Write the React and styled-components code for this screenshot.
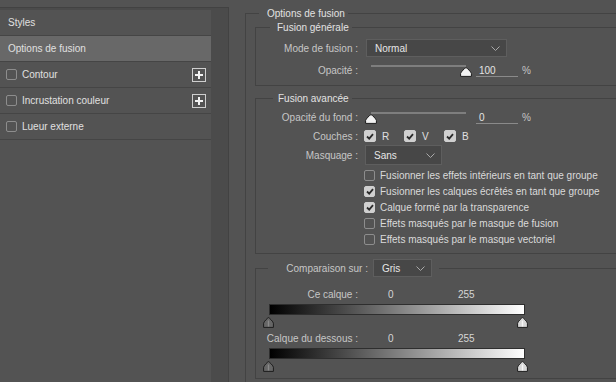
import styled, { createGlobalStyle } from 'styled-components';

const GlobalStyle = createGlobalStyle`
  html, body {
    margin: 0;
    padding: 0;
    background: #535353;
  }
  body {
    font-family: "Liberation Sans", Arial, sans-serif;
    font-size: 10px;
    color: #dcdcdc;
    overflow: hidden;
  }
  * {
    box-sizing: border-box;
  }
`

const Window = styled.div`
    display: flex;
    width: 616px;
    height: 382px;
    overflow: hidden;
    background: #535353;
`
const Sidebar = styled.div`
    width: 229px;
    flex-shrink: 0;
    margin-top: 7px;
    display: flex;
    border-top: 1px solid #424242;
    border-right: 1px solid #424242;
    background: #4b4b4b;
`
const StyleList = styled.div`
    width: 211px;
    margin-top: 2px;
    background: #535353;
`
const StyleRow = styled.div`
    display: flex;
    align-items: center;
    gap: 5px;
    height: 26px;
    padding: 0 5px 0 ${p => p.$check ? 6 : 8}px;
    border-bottom: 1px solid #454545;
    background: ${p => p.$active ? '#686868' : 'transparent'};
    color: #e0e0e0;
`
const RowText = styled.span`
    flex: 1;
`
const Content = styled.div`
    flex: 1;
    padding: 7px 0 0 16px;
`
const Group = styled.fieldset`
    margin: 0;
    padding: 0 0 0 9px;
    width: 420px;
    min-width: 0;
    min-height: 420px;
    border: 1px solid #434343;
`
const SubGroup = styled.fieldset`
    margin: ${p => p.$mt}px 0 0;
    padding: ${p => p.$pt}px 0 ${p => p.$pb}px;
    min-width: 0;
    border: 1px solid #434343;
`
const Caption = styled.legend`
    margin-left: ${p => p.$offset}px;
    padding: 0 ${p => p.$padR}px 0 ${p => p.$padL}px;
    line-height: 13px;
    color: #e2e2e2;
`
const LegendRow = styled.div`
    display: flex;
    align-items: center;
    height: 18px;
`
const Row = styled.div`
    display: flex;
    align-items: center;
    height: ${p => p.$h || 18}px;
    margin-top: ${p => p.$mt || 0}px;
`
const Label = styled.span`
    flex-shrink: 0;
    width: ${p => p.$w || 102}px;
    margin-right: ${p => p.$mr ?? 6}px;
    text-align: right;
    color: #c6c6c6;
`
const Select = styled.div`
    display: flex;
    align-items: center;
    justify-content: space-between;
    width: ${p => p.$w}px;
    height: ${p => p.$h || 18}px;
    margin-left: ${p => p.$ml || 0}px;
    padding: 0 6px 0 8px;
    background: #474747;
    border: 1px solid #5e5e5e;
    color: #e6e6e6;
`
const SliderBox = styled.div`
    position: relative;
    align-self: flex-start;
    width: 112px;
    height: 18px;
`
const Track = styled.div`
    width: 95px;
    height: 2px;
    margin: 4px 0 0 7px;
    background: #7e7e7e;
`
const Thumb = styled.svg`
    position: absolute;
    top: 6px;
`
const ValueInput = styled.div`
    display: flex;
    align-items: center;
    align-self: flex-start;
    width: 42px;
    height: 16px;
    padding: 3px 0 0 3px;
    border-bottom: 1px solid #8a8a8a;
    color: #e4e4e4;
`
const Unit = styled.span`
    margin-left: 4px;
    color: #c6c6c6;
`
const Channel = styled.div`
    display: flex;
    align-items: center;
    gap: 6px;
    width: 40px;
    color: #e0e0e0;
`
const Box = styled.span`
    display: flex;
    align-items: center;
    justify-content: center;
    flex-shrink: 0;
    width: ${p => p.$size}px;
    height: ${p => p.$size}px;
    border-radius: 2px;
    border: 1px solid ${p => p.$on ? '#cfcfcf' : '#8d8d8d'};
    background: ${p => p.$on ? '#d0d0d0' : 'transparent'};
`
const CheckList = styled.div`
    margin: 2px 0 0 108px;
`
const CheckRow = styled.div`
    display: flex;
    align-items: center;
    gap: 5px;
    height: 16px;
    color: #dadada;
`
const NumRow = styled.div`
    display: flex;
    align-items: center;
    height: 16px;
    margin-top: ${p => p.$mt || 0}px;
`
const Num = styled.span`
    width: 70px;
    margin-left: ${p => p.$ml || 0}px;
    color: #d6d6d6;
`
const BarWrap = styled.div`
    margin: 2px 0 0 13px;
    width: 256px;
`
const Bar = styled.div`
    height: 11px;
    border: 1px solid #2e2e2e;
    background: linear-gradient(to right, #000 0%, #fff 100%);
`
const ThumbRow = styled.div`
    position: relative;
    height: 12px;
    margin-top: 2px;
`
const BlendThumb = styled.svg`
    position: absolute;
    top: 0;
`

const Chevron = () => (
  <svg width="9" height="5" viewBox="0 0 9 5">
    <polyline points="0.5,0.5 4.5,4.5 8.5,0.5" fill="none" stroke="#a9a9a9" />
  </svg>
)

const Dropdown = ({ value, width, height, ml }) => (
  <Select $w={width} $h={height} $ml={ml}>
    <span>{value}</span>
    <Chevron />
  </Select>
)

const Tick = () => (
  <svg width="8" height="7" viewBox="0 0 8 7">
    <path d="M1 3.5 L3.2 5.6 L7 1.2" fill="none" stroke="#2b2b2b" strokeWidth="1.8" />
  </svg>
)

const CheckBox = ({ on, size = 11 }) => (
  <Box $on={on} $size={size}>{on && <Tick />}</Box>
)

const PlusIcon = () => (
  <svg width="14" height="14" viewBox="0 0 14 14">
    <rect x="0.5" y="0.5" width="13" height="13" fill="none" stroke="#cfcfcf" />
    <path d="M7 3v8M3 7h8" stroke="#f2f2f2" strokeWidth="2" />
  </svg>
)

const Slider = ({ value }) => (
  <SliderBox>
    <Track />
    <Thumb width="12" height="10" viewBox="0 0 12 10" style={{ left: 1 + value * 0.95 }}>
      <path d="M6 0.6 C6.8 0.6 11.4 5.2 11.4 6.4 V9.4 H0.6 V6.4 C0.6 5.2 5.2 0.6 6 0.6 Z" fill="#f2f2f2" stroke="#1c1c1c" />
    </Thumb>
  </SliderBox>
)

const Handle = ({ left, light }) => (
  <BlendThumb width="11" height="11" viewBox="0 0 11 11" style={{ left }}>
    <path d="M5.5 0.6 C6.2 0.6 10.4 5 10.4 6.2 V10.4 H0.6 V6.2 C0.6 5 4.8 0.6 5.5 0.6 Z" fill={light ? '#d8d8d8' : '#666'} stroke="#1c1c1c" />
    <path d="M5.5 3.5 V9.5" stroke={light ? '#f6f6f6' : '#8a8a8a'} strokeWidth="1.4" />
  </BlendThumb>
)

const BlendRange = ({ label, mt }) => (
  <>
    <NumRow $mt={mt}>
      <Label $mr={0}>{label}</Label>
      <Num $ml={30}>0</Num>
      <Num>255</Num>
    </NumRow>
    <BarWrap>
      <Bar />
      <ThumbRow>
        <Handle left={-6} />
        <Handle left={248} light />
      </ThumbRow>
    </BarWrap>
  </>
)

const styleItems = [
  { name: 'Styles' },
  { name: 'Options de fusion', active: true },
  { name: 'Contour', check: true, plus: true },
  { name: 'Incrustation couleur', check: true, plus: true },
  { name: 'Lueur externe', check: true },
]

const options = [
  { text: 'Fusionner les effets intérieurs en tant que groupe', on: false },
  { text: 'Fusionner les calques écrêtés en tant que groupe', on: true },
  { text: 'Calque formé par la transparence', on: true },
  { text: 'Effets masqués par le masque de fusion', on: false },
  { text: 'Effets masqués par le masque vectoriel', on: false },
]

const App = () => {
  return (
    <Window>
      <GlobalStyle />
      <Sidebar>
        <StyleList>
          {styleItems.map(item => (
            <StyleRow key={item.name} $active={item.active} $check={item.check}>
              {item.check && <CheckBox on={false} />}
              <RowText>{item.name}</RowText>
              {item.plus && <PlusIcon />}
            </StyleRow>
          ))}
        </StyleList>
      </Sidebar>

      <Content>
        <Group>
          <Caption $offset={4} $padL={8} $padR={3}>Options de fusion</Caption>

          <SubGroup $mt={1} $pt={5} $pb={6}>
            <Caption $offset={14} $padL={7} $padR={3}>Fusion générale</Caption>
            <Row>
              <Label>Mode de fusion :</Label>
              <Dropdown value="Normal" width={141} ml={2} />
            </Row>
            <Row $mt={4}>
              <Label>Opacité :</Label>
              <Slider value={100} />
              <ValueInput>100</ValueInput>
              <Unit>%</Unit>
            </Row>
          </SubGroup>

          <SubGroup $mt={6} $pt={3} $pb={6}>
            <Caption $offset={17} $padL={5} $padR={3}>Fusion avancée</Caption>
            <Row>
              <Label>Opacité du fond :</Label>
              <Slider value={0} />
              <ValueInput>0</ValueInput>
              <Unit>%</Unit>
            </Row>
            <Row $mt={1}>
              <Label>Couches :</Label>
              <Channel><CheckBox on size={12} />R</Channel>
              <Channel><CheckBox on size={12} />V</Channel>
              <Channel><CheckBox on size={12} />B</Channel>
            </Row>
            <Row $h={20}>
              <Label>Masquage :</Label>
              <Dropdown value="Sans" width={77} height={20} ml={1} />
            </Row>
            <CheckList>
              {options.map(o => (
                <CheckRow key={o.text}>
                  <CheckBox on={o.on} />
                  {o.text}
                </CheckRow>
              ))}
            </CheckList>
          </SubGroup>

          <SubGroup $mt={5} $pt={9} $pb={5}>
            <Caption $offset={12} $padL={0} $padR={7}>
              <LegendRow>
                <Label $w={100} $mr={5}>Comparaison sur :</Label>
                <Dropdown value="Gris" width={59} />
              </LegendRow>
            </Caption>
            <BlendRange label="Ce calque :" />
            <BlendRange label="Calque du dessous :" mt={1} />
          </SubGroup>
        </Group>
      </Content>
    </Window>
  )
}

export default App
